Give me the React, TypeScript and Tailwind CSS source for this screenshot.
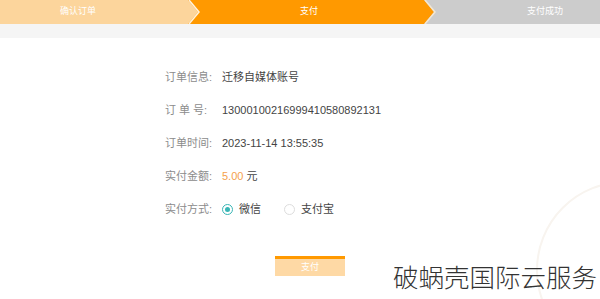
import React from 'react'

const font = { fontFamily: '"Liberation Sans", "Noto Sans CJK SC", sans-serif' }

function Row({ label, children }: { label: string; children: React.ReactNode }) {
  return (
    <div className="flex h-[33px] items-center text-[11px]">
      <span className="w-[57px] text-[#8c8c8c]">{label}</span>
      <div className="text-[#444]">{children}</div>
    </div>
  )
}

export default function App() {
  return (
    <div className="relative h-[299px] w-[600px] overflow-hidden bg-white" style={font}>
      <div className="relative h-[24px] w-full bg-[#cccccc] text-[9px] text-white">
        <svg className="absolute left-0 top-0" width="600" height="24">
          <polygon points="0,0 424,0 434,12 424,24 0,24" fill="#ff9900" />
          <polygon points="0,0 188,0 198,12 188,24 0,24" fill="#fcd59c" />
          <polyline points="189,0 199,12 189,24" fill="none" stroke="#fff2dc" strokeWidth="1.5" />
          <polyline points="425,0 435,12 425,24" fill="none" stroke="#f3e7d3" strokeWidth="1.5" />
        </svg>
        <div className="absolute inset-0 flex items-center">
          <span className="absolute left-[60px]">确认订单</span>
          <span className="absolute left-[300px]">支付</span>
          <span className="absolute left-[527px]">支付成功</span>
        </div>
      </div>
      <div className="h-[14px] bg-[#f5f5f5]" />

      <div className="pl-[165px] pt-[23px]">
        <Row label="订单信息:">迁移自媒体账号</Row>
        <Row label="订 单 号:">13000100216999410580892131</Row>
        <Row label="订单时间:">2023-11-14 13:55:35</Row>
        <Row label="实付金额:">
          <span className="text-[#f5a14a]">5.00</span> 元
        </Row>
        <Row label="实付方式:">
          <div className="flex items-center">
            <span className="flex h-[11px] w-[11px] items-center justify-center rounded-full border border-[#38b6b6]">
              <span className="h-[5px] w-[5px] rounded-full bg-[#38b6b6]" />
            </span>
            <span className="ml-[6px]">微信</span>
            <span className="ml-[23px] h-[11px] w-[11px] rounded-full border border-[#dddddd]" />
            <span className="ml-[6px]">支付宝</span>
          </div>
        </Row>
      </div>

      <div className="ml-[275px] mt-[30px] flex h-[20px] w-[70px] items-center justify-center border-t-[3px] border-[#ff9900] bg-[#fed9a5] text-[9px] text-white">
        支付
      </div>

      <svg className="absolute left-[530px] top-[175px]" width="200" height="200">
        <circle cx="95" cy="95" r="88" fill="none" stroke="#f8f4ef" strokeWidth="2" />
      </svg>
      <div className="absolute left-[393px] top-[261px] whitespace-nowrap text-[25.5px] font-light leading-[30px] text-[#333]" style={{ fontFamily: '"Noto Sans CJK SC", sans-serif' }}>
        破蜗壳国际云服务
      </div>
    </div>
  )
}
